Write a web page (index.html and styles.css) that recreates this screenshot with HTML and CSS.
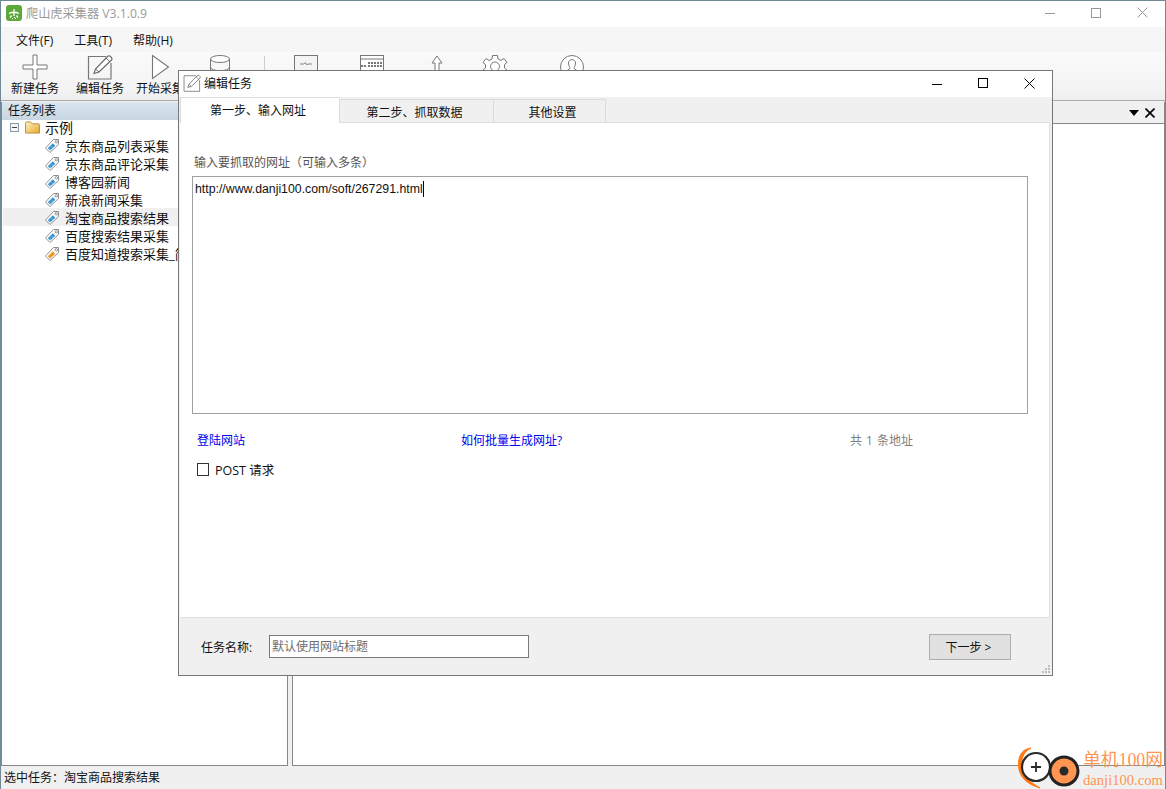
FILE: index.html
```html
<!DOCTYPE html>
<html lang="zh">
<head>
<meta charset="utf-8">
<title>爬山虎采集器</title>
<link rel="stylesheet" href="styles.css">
</head>
<body>
<svg class="defs" width="0" height="0">
  <defs>
    <symbol id="tag" viewBox="0 0 16 16">
      <path d="M14.500 1.500 L9.500 1.500 L1.500 10 L6 14.500 L14.500 6.500 Z" fill="#fff" stroke="#8f8f8f" stroke-width="1"/>
      <circle cx="12.300" cy="3.800" r="1.200" fill="#fff" stroke="#777" stroke-width=".8"/>
      <path d="M3.800 10.200 L6.200 12.500 L11.300 7.700 L8.900 5.200 Z" fill="#2f93d6"/>
      <path d="M5.500 10.200 L6.800 11.400 M7.500 8.300 L8.800 9.500" stroke="#bfe3f7" stroke-width=".7"/>
    </symbol>
    <symbol id="tag-o" viewBox="0 0 16 16">
      <path d="M14.500 1.500 L9.500 1.500 L1.500 10 L6 14.500 L14.500 6.500 Z" fill="#fff" stroke="#8f8f8f" stroke-width="1"/>
      <circle cx="12.300" cy="3.800" r="1.200" fill="#fff" stroke="#777" stroke-width=".8"/>
      <path d="M3.800 10.200 L6.200 12.500 L11.300 7.700 L8.900 5.200 Z" fill="#f09a24"/>
    </symbol>
    <symbol id="edit" viewBox="0 0 26 26">
      <path d="M19 2.500 H1.500 V25 H24 V9" fill="none" stroke="#777" stroke-width="1.200"/>
      <path d="M7 19.500 L8.500 15 L20.500 2.500 Q22 1 23.500 2.500 L24.500 3.500 Q25.500 5 24.500 6 L12 18 Z" fill="#fff" stroke="#666" stroke-width="1.100"/>
      <path d="M8.500 15 L12 18 M19 4 L23 8" stroke="#666" stroke-width="1"/>
    </symbol>
  </defs>
</svg>

<div class="app">
  <header class="titlebar">
    <svg class="applogo" width="16" height="16" viewBox="0 0 16 16">
      <rect width="16" height="16" rx="3" fill="#5da83a"/>
      <path d="M3 8.500 C6 7 10 7 13 8.500 M8 4 V11 M5.500 10.500 L4 12.500 M10.500 10.500 L12 12.500" fill="none" stroke="#fff" stroke-width="1.300"/>
      <path d="M6 13h1v1H6zM9 13h1v1H9zM8 12h1v1H8z" fill="#fff"/>
    </svg>
    <span class="apptitle">爬山虎采集器 V3.1.0.9</span>
    <div class="winctl winctl-main">
      <span class="wc"><i class="wc-min"></i></span>
      <span class="wc"><i class="wc-max"></i></span>
      <span class="wc"><svg width="11" height="11" viewBox="0 0 11 11"><path d="M.5 .5 L10.500 10.500 M10.500 .5 L.5 10.500" stroke="#999" fill="none"/></svg></span>
    </div>
  </header>

  <nav class="menubar">
    <span class="menu">文件(F)</span>
    <span class="menu">工具(T)</span>
    <span class="menu">帮助(H)</span>
  </nav>

  <div class="toolbar">
    <div class="tool tool-first">
      <svg width="26" height="26" viewBox="0 0 26 26"><path d="M11 1 H15 V11 H25 V15 H15 V25 H11 V15 H1 V11 H11 Z" fill="#fff" stroke="#777"/></svg>
      <span>新建任务</span>
    </div>
    <div class="tool tool-2">
      <svg width="26" height="26"><use href="#edit"/></svg>
      <span>编辑任务</span>
    </div>
    <div class="tool">
      <svg width="26" height="26" viewBox="0 0 26 26"><path d="M5.500 1.500 L21.500 13 L5.500 24.500 Z" fill="#fff" stroke="#777" stroke-width="1.100"/></svg>
      <span>开始采集</span>
    </div>
    <div class="tool">
      <svg width="26" height="26" viewBox="0 0 26 26"><ellipse cx="13" cy="5" rx="9.500" ry="3.500" fill="#fff" stroke="#777"/><path d="M3.500 5 V21 C3.500 26 22.500 26 22.500 21 V5 M3.500 13 C3.500 18 22.500 18 22.500 13" fill="none" stroke="#777"/></svg>
    </div>
    <div class="tool-sep"></div>
    <div class="tool tool-chart">
      <svg width="26" height="26" viewBox="0 0 26 26"><rect x="1.500" y="1.500" width="23" height="23" fill="#f4f4f4" stroke="#777"/><path d="M7 10 H11 L12.500 8.500 L14 11 L15 10 H19" fill="none" stroke="#888"/></svg>
    </div>
    <div class="tool tool-grid">
      <svg width="26" height="26" viewBox="0 0 26 26"><rect x="1.500" y="1.500" width="23" height="23" fill="#fff" stroke="#777"/><path d="M1.500 5 H24.500" stroke="#777"/><path d="M2 12 H7 M9 9 H24 M9 12 H24" stroke="#777" stroke-width="2" stroke-dasharray="2 1"/></svg>
    </div>
    <div class="tool tool-up">
      <svg width="26" height="26" viewBox="0 0 26 26"><path d="M13 2 L18 9 H15 V24 H11 V9 H8 Z" fill="#fff" stroke="#777"/></svg>
    </div>
    <div class="tool tool-gear">
      <svg width="26" height="26" viewBox="0 0 26 26"><path d="M10.500 1.500 H15.500 L16 5 L19 6.500 L22 4.500 L25 8.500 L22.500 10.500 V14 L25 16 L22 20.500 L19 18.500 L16 20 L15.500 24 H10.500 L10 20 L7 18.500 L4 20.500 L1 16 L3.500 14 V10.500 L1 8.500 L4 4.500 L7 6.500 L10 5 Z" fill="#fff" stroke="#777"/><circle cx="13" cy="12.500" r="4.500" fill="#fff" stroke="#777"/></svg>
    </div>
    <div class="tool tool-user">
      <svg width="26" height="26" viewBox="0 0 26 26"><circle cx="13" cy="13" r="11.500" fill="#fff" stroke="#777"/><path d="M9.500 9 C9.500 4.500 16.500 4.500 16.500 9 C16.500 12 15 13 15 14.500 L20 18 M6 18 L11 14.500 C11 13 9.500 12 9.500 9" fill="none" stroke="#777"/></svg>
    </div>
  </div>

  <main class="workspace">
    <aside class="pane pane-left">
      <div class="pane-head">任务列表</div>
      <ul class="tree">
        <li class="tree-root">
          <span class="expander"></span>
          <svg class="folder" width="15" height="13" viewBox="0 0 16 14"><defs><linearGradient id="fg" x1="0" y1="0" x2="1" y2="1"><stop offset="0" stop-color="#fff3c4"/><stop offset="1" stop-color="#e8a92c"/></linearGradient></defs><path d="M.5 2.500 Q.5 1 2 1 H6 L7.500 3 H14 Q15.500 3 15.500 4.500 V13 H.5 Z" fill="url(#fg)" stroke="#b48a3c"/></svg>
          <span class="tree-root-label">示例</span>
        </li>
        <li class="tree-item"><svg width="16" height="16"><use href="#tag"/></svg>京东商品列表采集</li>
        <li class="tree-item"><svg width="16" height="16"><use href="#tag"/></svg>京东商品评论采集</li>
        <li class="tree-item"><svg width="16" height="16"><use href="#tag"/></svg>博客园新闻</li>
        <li class="tree-item"><svg width="16" height="16"><use href="#tag"/></svg>新浪新闻采集</li>
        <li class="tree-item tree-item-selected"><svg width="16" height="16"><use href="#tag"/></svg>淘宝商品搜索结果</li>
        <li class="tree-item"><svg width="16" height="16"><use href="#tag"/></svg>百度搜索结果采集</li>
        <li class="tree-item"><svg width="16" height="16"><use href="#tag-o"/></svg>百度知道搜索采集_简单</li>
      </ul>
    </aside>
    <section class="pane pane-right">
      <div class="pane-tools">
        <svg width="10" height="6" viewBox="0 0 10 6"><path d="M0 0 H10 L5 6 Z" fill="#000"/></svg>
        <svg width="10" height="10" viewBox="0 0 10 10"><path d="M.5 .5 L9.500 9.500 M9.500 .5 L.5 9.500" stroke="#000" stroke-width="1.600" fill="none"/></svg>
      </div>
    </section>
  </main>

  <footer class="statusbar">选中任务：淘宝商品搜索结果</footer>
</div>

<div class="dialog">
  <div class="dlg-title">
    <svg class="dlg-icon" width="18" height="18" viewBox="0 0 26 26"><use href="#edit"/></svg>
    <span>编辑任务</span>
    <div class="winctl winctl-dlg">
      <span class="wc"><i class="wc-min wc-dark"></i></span>
      <span class="wc"><i class="wc-max wc-dark"></i></span>
      <span class="wc"><svg width="11" height="11" viewBox="0 0 11 11"><path d="M.5 .5 L10.500 10.500 M10.500 .5 L.5 10.500" stroke="#000" fill="none"/></svg></span>
    </div>
  </div>
  <div class="dlg-body">
    <div class="tabs">
      <div class="tab tab-active">第一步、输入网址</div>
      <div class="tab tab-2">第二步、抓取数据</div>
      <div class="tab tab-3">其他设置</div>
    </div>
    <div class="panel">
      <label class="url-label">输入要抓取的网址（可输入多条）</label>
      <div class="url-box"><span class="url-text">http://www.danji100.com/soft/267291.html</span><i class="caret"></i></div>
      <div class="link-row">
        <a class="link">登陆网站</a>
        <a class="link">如何批量生成网址?</a>
        <span class="count">共 1 条地址</span>
      </div>
      <div class="check-row"><span class="checkbox"></span><span>POST 请求</span></div>
    </div>
    <div class="dlg-foot">
      <span class="name-label">任务名称:</span>
      <div class="name-input">默认使用网站标题</div>
      <div class="next-btn">下一步 &gt;</div>
    </div>
    <svg class="grip" width="9" height="9" viewBox="0 0 9 9"><path d="M6 0h2v2H6zM3 3h2v2H3zM6 3h2v2H6zM0 6h2v2H0zM3 6h2v2H3zM6 6h2v2H6z" fill="#bdbdbd"/></svg>
  </div>
</div>

<div class="watermark">
  <svg width="66" height="44" viewBox="0 0 66 44">
    <path d="M15 3 C6 4 2 11 2.500 21 C3 31 10 39 24 43 C14 37 6 31 5.500 21 C5 12 9 6 15 3 Z" fill="#ff7a14" stroke="#ff7a14"/>
    <circle cx="20" cy="22" r="14" fill="#fff" stroke="#2a2a2a" stroke-width="2.200"/>
    <path d="M20 17 V27 M15 22 H25" stroke="#2a2a2a" stroke-width="1.800"/>
    <circle cx="48" cy="26" r="14" fill="#ff9550" stroke="#222" stroke-width="3"/>
    <circle cx="48" cy="26" r="4.500" fill="#2a2a2a"/>
  </svg>
  <div class="wm-text">
    <div class="wm-cn">单机100网</div>
    <div class="wm-en">danji100.com</div>
  </div>
</div>
</body>
</html>
```
FILE: styles.css
```css
* { box-sizing: border-box; }
html, body { height: 100%; }
body {
  margin: 0;
  overflow: hidden;
  position: relative;
  padding: 1px 1px 0;
  background: #6f8a96;
  font-family: "Open Sans", "Noto Sans CJK SC", sans-serif;
  font-size: 12px;
  color: #111;
}
.defs { position: absolute; }
ul { list-style: none; margin: 0; padding: 0; }

.app {
  height: 788px;
  width: 1164px;
  background: #f0f0f0;
  display: flex;
  flex-direction: column;
  overflow: hidden;
}

.titlebar {
  height: 26px;
  flex: none;
  background: #fff;
  display: flex;
  align-items: center;
  padding: 0 0 3px 5px;
}
.applogo { flex: none; }
.apptitle { margin-left: 4px; color: #9a9a9a; font-size: 12.200px; }
.winctl { margin-left: auto; display: flex; align-items: center; }
.wc { width: 46px; display: flex; justify-content: center; align-items: center; }
.wc-min { display: block; width: 10px; height: 1px; background: #999; margin-top: 2px; }
.wc-max { display: block; width: 10px; height: 10px; border: 1px solid #999; }
.wc-dark.wc-min { background: #000; }
.wc-dark.wc-max { border-color: #000; }

.menubar {
  height: 25px;
  flex: none;
  background: #f6f6f6;
  display: flex;
  align-items: center;
  padding-left: 15px;
  gap: 21px;
}
.menu { color: #111; }

.toolbar {
  height: 49px;
  flex: none;
  display: flex;
  padding-left: 4px;
  background: linear-gradient(#fafafa, #f3f3f3 80%, #eee);
  border-bottom: 1px solid #aaa;
}
.tool {
  width: 60px;
  display: flex;
  flex-direction: column;
  align-items: center;
  padding-top: 2px;
  flex: none;
}
.tool span { line-height: 16px; margin-top: 1px; white-space: nowrap; }
.tool-2 { margin-left: 5px; }
.tool-sep { width: 1px; height: 20px; margin: 4px 0 0 14px; background: #ccc; flex: none; }
.tool-chart { margin-left: 11px; }
.tool-grid { margin-left: 6px; }
.tool-up { margin-left: 5px; }
.tool-gear { margin-left: -2px; }
.tool-user { margin-left: 17px; }

.workspace {
  flex: 1;
  min-height: 0;
  display: flex;
  padding-top: 1px;
  gap: 4px;
  background: #f0f0f0;
}
.pane {
  background: #fff;
  display: flex;
  flex-direction: column;
  border-bottom: 1px solid #888;
}
.pane-left { width: 287px; flex: none; border-left: 1px solid #888; border-right: 1px solid #888; }
.pane-right { flex: 1; border-left: 1px solid #888; border-right: 1px solid #888; }
.pane-head {
  height: 18px;
  flex: none;
  line-height: 18px;
  padding-left: 6px;
  background: linear-gradient(#dbe6ef, #c7d6e2);
  color: #111;
}
.pane-tools {
  height: 22px;
  flex: none;
  display: flex;
  align-items: center;
  justify-content: flex-end;
  gap: 6px;
  padding-right: 9px;
  background: #f0f0f0;
  border-bottom: 1px solid #888;
}

.tree { margin-top: -2px; font-size: 13px; }
.tree li { height: 18px; display: flex; align-items: center; white-space: nowrap; overflow: hidden; }
.tree-root { padding-left: 8px; }
.expander {
  position: relative;
  width: 9px;
  height: 9px;
  border: 1px solid #8a9aa8;
  background: #f4f6f8;
  flex: none;
  margin-right: 6px;
}
.expander::after {
  content: "";
  position: absolute;
  left: 1px;
  top: 3px;
  width: 5px;
  height: 1px;
  background: #444;
}
.folder { flex: none; }
.tree-root-label { margin-left: 5px; font-size: 14px; }
.tree-item { padding-left: 42px; }
.tree-item svg { flex: none; margin: 1px 5px 0 0; }
.tree-item-selected { background: #f0f0f0; margin-left: 1px; padding-left: 41px; }

.statusbar {
  height: 23px;
  flex: none;
  line-height: 23px;
  padding-left: 3px;
  background: #f0f0f0;
}

/* Child window floats over the main window */
.dialog {
  position: absolute;
  left: 178px;
  top: 70px;
  width: 875px;
  height: 606px;
  border: 1px solid #777;
  background: #f0f0f0;
  display: flex;
  flex-direction: column;
}
.dlg-title {
  height: 26px;
  flex: none;
  background: #fff;
  display: flex;
  align-items: center;
  padding: 0 0 2px 4px;
}
.dlg-icon { flex: none; margin-right: 3px; }
.winctl-dlg .wc { width: 46px; }

.dlg-body { flex: 1; min-height: 0; display: flex; flex-direction: column; position: relative; }
.tabs { height: 26px; flex: none; display: flex; align-items: flex-end; padding-left: 1px; }
.tab {
  height: 24px;
  line-height: 26px;
  text-align: center;
  background: #f0f0f0;
  border: 1px solid #dcdcdc;
  border-bottom: none;
  margin-left: -1px;
}
.tab-active {
  width: 159px;
  height: 26px;
  line-height: 25px;
  margin-left: 0;
  padding-right: 4px;
  background: #fff;
  border-right: none;
  position: relative;
  z-index: 1;
}
.tab-2 { width: 155px; margin-left: 0; padding-right: 4px; }
.tab-3 { width: 113px; padding-left: 6px; }

.panel {
  flex: 1;
  min-height: 0;
  margin: -1px 2px 0 1px;
  background: #fff;
  border: 1px solid #e0e0e0;
  border-left-color: #fff;
  padding: 32px 21px 0 11px;
}
.url-label { display: block; height: 16px; line-height: 16px; padding-left: 2px; color: #555; }
.url-box {
  height: 238px;
  margin-top: 5px;
  border: 1px solid #a0a0a0;
  padding: 4px 2px;
  display: flex;
  align-items: flex-start;
}
.url-text { font-family: "Liberation Sans", sans-serif; font-size: 12.300px; line-height: 16px; color: #111; }
.caret { display: block; width: 1px; height: 16px; background: #000; flex: none; }
.link-row {
  display: grid;
  grid-template-columns: 264px 389px auto;
  margin-top: 18px;
  padding-left: 5px;
  line-height: 17px;
}
.link { color: #0000ee; }
.count { color: #808080; word-spacing: 1px; }
.check-row { display: flex; align-items: center; margin-top: 11px; padding-left: 5px; height: 18px; font-size: 12.500px; }
.checkbox { width: 12px; height: 13px; border: 1px solid #333; background: #fff; margin-right: 6px; flex: none; }

.dlg-foot {
  height: 57px;
  flex: none;
  display: flex;
  align-items: center;
  padding: 0 41px 0 22px;
}
.name-label { width: 68px; flex: none; }
.name-input {
  width: 260px;
  height: 23px;
  border: 1px solid #7a7a7a;
  background: #fff;
  line-height: 21px;
  padding-left: 2px;
  color: #6d6d6d;
}
.next-btn {
  margin: 1px 0 0 auto;
  width: 82px;
  height: 26px;
  line-height: 25px;
  text-align: center;
  padding-right: 3px;
  background: #e1e1e1;
  border: 1px solid #adadad;
}
.grip { position: absolute; right: 1px; bottom: 1px; }

.watermark {
  position: absolute;
  right: 0;
  bottom: 0;
  height: 44px;
  width: 150px;
  display: flex;
  pointer-events: none;
}
.watermark svg { flex: none; }
.wm-text { margin-left: 1px; padding-top: 3px; color: #ff9550; font-family: "Liberation Serif", "Noto Sans CJK SC", serif; white-space: nowrap; }
.wm-cn { font-size: 17.800px; line-height: 24px; }
.wm-en { font-size: 14.600px; line-height: 16px; }
```
